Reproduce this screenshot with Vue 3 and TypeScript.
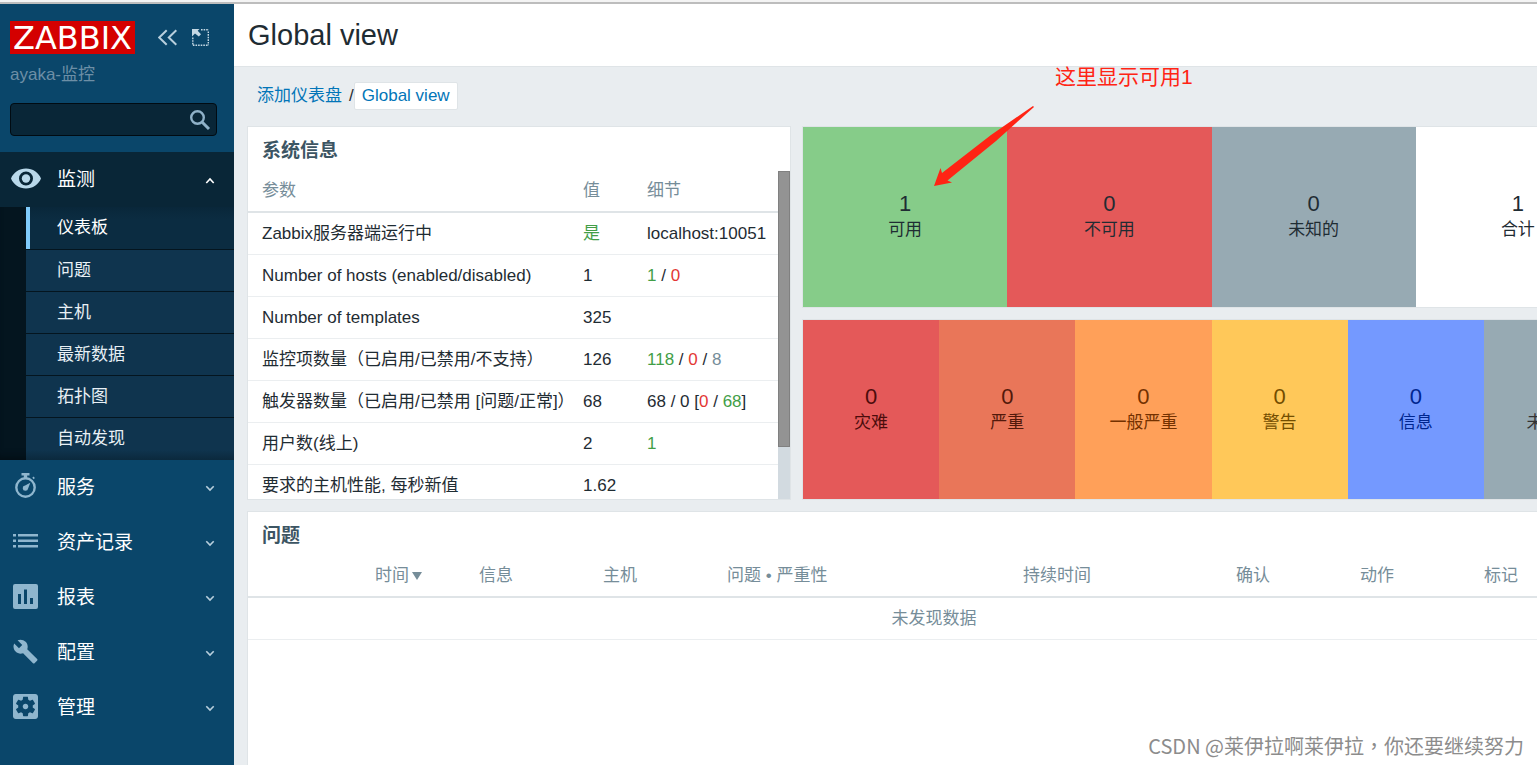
<script setup lang="ts">
interface MenuSection {
  id: string
  label: string
}
interface Part {
  text: string
  tone?: 'green' | 'red' | 'grey'
}
interface InfoRow {
  name: string
  value: Part
  details: Part[]
}
interface Tile {
  count: number
  label: string
  kind: string
}

const submenu: string[] = ['仪表板', '问题', '主机', '最新数据', '拓扑图', '自动发现']

const sections: MenuSection[] = [
  { id: 'services', label: '服务' },
  { id: 'inventory', label: '资产记录' },
  { id: 'reports', label: '报表' },
  { id: 'config', label: '配置' },
  { id: 'admin', label: '管理' },
]

const infoRows: InfoRow[] = [
  { name: 'Zabbix服务器端运行中', value: { text: '是', tone: 'green' }, details: [{ text: 'localhost:10051' }] },
  {
    name: 'Number of hosts (enabled/disabled)',
    value: { text: '1' },
    details: [{ text: '1', tone: 'green' }, { text: ' / ' }, { text: '0', tone: 'red' }],
  },
  { name: 'Number of templates', value: { text: '325' }, details: [] },
  {
    name: '监控项数量（已启用/已禁用/不支持）',
    value: { text: '126' },
    details: [
      { text: '118', tone: 'green' },
      { text: ' / ' },
      { text: '0', tone: 'red' },
      { text: ' / ' },
      { text: '8', tone: 'grey' },
    ],
  },
  {
    name: '触发器数量（已启用/已禁用 [问题/正常]）',
    value: { text: '68' },
    details: [
      { text: '68 / 0 [' },
      { text: '0', tone: 'red' },
      { text: ' / ' },
      { text: '68', tone: 'green' },
      { text: ']' },
    ],
  },
  { name: '用户数(线上)', value: { text: '2' }, details: [{ text: '1', tone: 'green' }] },
  { name: '要求的主机性能, 每秒新值', value: { text: '1.62' }, details: [] },
]

const hostTiles: Tile[] = [
  { count: 1, label: '可用', kind: 'available' },
  { count: 0, label: '不可用', kind: 'unavailable' },
  { count: 0, label: '未知的', kind: 'unknown' },
  { count: 1, label: '合计', kind: 'total' },
]

const severityTiles: Tile[] = [
  { count: 0, label: '灾难', kind: 'disaster' },
  { count: 0, label: '严重', kind: 'high' },
  { count: 0, label: '一般严重', kind: 'average' },
  { count: 0, label: '警告', kind: 'warning' },
  { count: 0, label: '信息', kind: 'information' },
  { count: 0, label: '未分类', kind: 'unclassified' },
]

const problemColumns: string[] = ['信息', '主机', '问题 • 严重性', '持续时间', '确认', '动作', '标记']
</script>

<template>
  <div class="app" lang="zh-CN">
    <div class="frame-edge"></div>
    <div class="shell">
      <aside class="sidebar">
        <div class="brand">
          <a class="logo" href="#">ZABBIX</a>
          <button class="icon-button" type="button" aria-label="收起侧边栏">
            <svg width="20" height="18" viewBox="0 0 20 18" fill="none" stroke="#b8cfdd" stroke-width="2">
              <path d="M8.700 1.200 1.200 8.500l7.500 7.300M18.300 1.200 10.800 8.500l7.500 7.300" />
            </svg>
          </button>
          <button class="icon-button" type="button" aria-label="隐藏侧边栏">
            <svg width="18" height="18" viewBox="0 0 18 18" fill="#c4d8e4">
              <path d="M0 0h7.500L5.700 1.800l3.300 3.500-2.200 2.200L3 4.500 0 7.500z" />
              <path d="M9 .8H17M16.300 2.500V16.300M15.500 16.300H.800V8.500" fill="none" stroke="#c4d8e4" stroke-width="1.400" stroke-dasharray="1.600 1" />
            </svg>
          </button>
        </div>
        <div class="server-name">ayaka-监控</div>
        <form class="search" role="search" @submit.prevent>
          <input type="text" aria-label="搜索" />
          <button type="submit" aria-label="搜索">
            <svg width="22" height="22" viewBox="0 0 22 22" fill="none" stroke="#8fb1c8">
              <circle cx="8.500" cy="8.500" r="6.300" stroke-width="2.400" />
              <path d="M13 13l7 7" stroke-width="3" />
            </svg>
          </button>
        </form>

        <nav class="menu">
          <button class="section open" type="button" aria-expanded="true">
            <span class="section-icon">
              <svg width="30" height="22" viewBox="0 0 30 22" fill="#b9d8ea">
                <path
                  fill-rule="evenodd"
                  d="M15 .5C8.200.5 2.400 4.500 0 10.500c2.400 6 8.200 10 15 10s12.600-4 15-10C27.600 4.500 21.800.5 15 .5zM15 17.500a7 7 0 1 1 0-14 7 7 0 0 1 0 14z"
                />
                <circle cx="15" cy="10.500" r="4.200" />
              </svg>
            </span>
            <span class="section-label">监测</span>
            <svg class="chevron" width="10" height="8" viewBox="0 0 10 8" fill="none" stroke="#fff" stroke-width="1.600">
              <path d="M1.300 7 5 3l3.700 4" />
            </svg>
          </button>
          <ul class="submenu">
            <li v-for="(item, i) in submenu" :key="item">
              <a href="#" :class="{ selected: i === 0 }">{{ item }}</a>
            </li>
          </ul>
          <button v-for="s in sections" :key="s.id" class="section" type="button" aria-expanded="false">
            <span class="section-icon">
              <svg v-if="s.id === 'services'" width="25" height="27" viewBox="0 0 25 27" fill="#8fb6ce">
                <path d="M8.500 0h8v2.500h-2.300V5h-3.400V2.500H8.500z" />
                <circle cx="12.500" cy="14.500" r="9.200" fill="none" stroke="#8fb6ce" stroke-width="2.400" />
                <path d="M17.300 9.800l-2.200 5.600a2.700 2.700 0 1 1-3-3zM19.300 4.800l1.200-1.200 1.400 1.400-1.200 1.200z" />
              </svg>
              <svg v-else-if="s.id === 'inventory'" width="25" height="25" viewBox="0 0 25 25" fill="#8fb6ce">
                <path d="M0 5h3v2.500H0zM5 5h20v2.500H5zM0 10.500h3V13H0zM5 10.500h20V13H5zM0 16h3v2.500H0zM5 16h20v2.500H5z" />
              </svg>
              <svg v-else-if="s.id === 'reports'" width="25" height="25" viewBox="0 0 25 25" fill="#8fb6ce">
                <path
                  fill-rule="evenodd"
                  d="M2 0h21a2 2 0 0 1 2 2v21a2 2 0 0 1-2 2H2a2 2 0 0 1-2-2V2a2 2 0 0 1 2-2zM5 10h3v10H5zM11 5.500h3V20h-3zM17 14h3v6h-3z"
                />
              </svg>
              <svg v-else-if="s.id === 'config'" width="25" height="25" viewBox="0.500 0.500 23 23" fill="#8fb6ce">
                <path
                  d="M22.700 19l-9.100-9.100c.9-2.300.4-5-1.500-6.900-2-2-5-2.400-7.400-1.300L9 6 6 9 1.600 4.700C.4 7.100.9 10.100 2.900 12.100c1.900 1.900 4.600 2.400 6.900 1.500l9.100 9.100c.4.4 1 .4 1.400 0l2.300-2.300c.5-.4.5-1.100.1-1.400z"
                />
              </svg>
              <svg v-else width="25" height="25" viewBox="3 3 18 18" fill="#8fb6ce">
                <path
                  d="M12 10c-1.100 0-2 .9-2 2s.9 2 2 2 2-.9 2-2-.9-2-2-2zm7-7H5c-1.110 0-2 .9-2 2v14c0 1.100.89 2 2 2h14c1.110 0 2-.9 2-2V5c0-1.100-.89-2-2-2zm-1.750 9c0 .23-.02.46-.05.68l1.480 1.160c.13.11.17.3.080.45l-1.400 2.420c-.09.15-.27.21-.43.15l-1.740-.7c-.36.28-.76.51-1.180.69l-.26 1.850c-.03.17-.18.3-.35.3h-2.800c-.17 0-.32-.13-.35-.29l-.26-1.850c-.43-.18-.82-.41-1.180-.69l-1.740.7c-.16.060-.34 0-.43-.15l-1.400-2.420c-.09-.15-.05-.34.080-.45l1.480-1.160c-.03-.23-.05-.46-.05-.69s.020-.46.050-.68l-1.480-1.160c-.13-.11-.17-.3-.08-.45l1.400-2.420c.09-.15.27-.21.43-.15l1.740.7c.36-.28.76-.51 1.180-.69l.26-1.850c.03-.17.18-.3.35-.3h2.800c.17 0 .32.13.35.29l.26 1.850c.43.18.82.41 1.180.69l1.740-.7c.16-.06.34 0 .43.15l1.400 2.420c.09.15.05.34-.08.45l-1.480 1.160c.03.23.05.46.05.69z"
                />
              </svg>
            </span>
            <span class="section-label">{{ s.label }}</span>
            <svg class="chevron" width="10" height="8" viewBox="0 0 10 8" fill="none" stroke="#b8cfdd" stroke-width="1.600">
              <path d="M1.300 2.200 5 6l3.700-3.800" />
            </svg>
          </button>
        </nav>
      </aside>

      <main class="content">
        <header class="page-header">
          <h1>Global view</h1>
        </header>
        <nav class="breadcrumbs">
          <a href="#">添加仪表盘</a>
          <span class="slash">/</span>
          <a class="current" href="#">Global view</a>
        </nav>

        <div class="dashboard">
          <section class="widget system-info">
            <h2>系统信息</h2>
            <div class="scroll-area">
              <div class="scroll-content">
                <table>
                  <colgroup>
                    <col class="col-param" />
                    <col class="col-value" />
                    <col />
                  </colgroup>
                  <thead>
                    <tr>
                      <th>参数</th>
                      <th>值</th>
                      <th>细节</th>
                    </tr>
                  </thead>
                  <tbody>
                    <tr v-for="row in infoRows" :key="row.name">
                      <td>{{ row.name }}</td>
                      <td :class="row.value.tone">{{ row.value.text }}</td>
                      <td><span v-for="(p, i) in row.details" :key="i" :class="p.tone">{{ p.text }}</span></td>
                    </tr>
                  </tbody>
                </table>
              </div>
              <div class="scrollbar"><div class="thumb"></div></div>
            </div>
          </section>

          <section class="widget tiles">
            <div v-for="t in hostTiles" :key="t.kind" class="tile" :class="t.kind">
              <span class="count">{{ t.count }}</span>
              <span>{{ t.label }}</span>
            </div>
          </section>

          <section class="widget tiles">
            <div v-for="t in severityTiles" :key="t.kind" class="tile" :class="t.kind">
              <span class="count">{{ t.count }}</span>
              <span>{{ t.label }}</span>
            </div>
          </section>

          <section class="widget problems">
            <h2>问题</h2>
            <table>
              <colgroup>
                <col class="col-lead" />
                <col class="col-time" />
                <col class="col-std" />
                <col class="col-std" />
                <col class="col-problem" />
                <col class="col-duration" />
                <col class="col-std" />
                <col class="col-std" />
                <col />
              </colgroup>
              <thead>
                <tr>
                  <td></td>
                  <th><a class="sort" href="#">时间<span class="arrow"></span></a></th>
                  <th v-for="c in problemColumns" :key="c">{{ c }}</th>
                </tr>
              </thead>
              <tbody>
                <tr>
                  <td class="empty" colspan="9">未发现数据</td>
                </tr>
              </tbody>
            </table>
          </section>
        </div>
      </main>
    </div>

    <div class="note">这里显示可用1</div>
    <svg class="note-arrow" width="102" height="82" viewBox="0 0 102 82" fill="#ff2414">
      <path d="M100 0 L58 29 L9 67 L7.500 62 L1 80 L19 76.500 L14.500 74.500 L63 35 L101 1 Z" />
    </svg>
    <div class="watermark" lang="zh-TW">CSDN @莱伊拉啊莱伊拉，你还要继续努力</div>
  </div>
</template>

<style>
body {
  margin: 0;
}
</style>

<style scoped>
.app {
  position: relative;
  display: flex;
  flex-direction: column;
  box-sizing: border-box;
  min-height: 100vh;
  overflow: hidden;
  background: #e9edf0;
  color: #1f2c33;
  font-family: "Liberation Sans", "Noto Sans CJK SC", sans-serif;
  font-size: 17px;
  line-height: 26px;
}
.app * {
  box-sizing: border-box;
}
a {
  color: #0275b8;
  text-decoration: none;
}
button {
  margin: 0;
  padding: 0;
  border: 0;
  background: none;
  font: inherit;
  color: inherit;
  cursor: pointer;
}
svg {
  display: block;
}
.frame-edge {
  height: 4px;
  background: #f4f4f4;
  border-bottom: 2px solid #bdbdbd;
}
.shell {
  flex: 1;
  display: flex;
}

/* Sidebar */
.sidebar {
  flex: none;
  width: 234px;
  background: #0a466a;
}
.brand {
  display: flex;
  align-items: center;
  padding: 17px 10px 0;
}
.logo {
  width: 125px;
  height: 33px;
  margin-right: 23px;
  background: #d40000;
  color: #fff;
  font-family: "DejaVu Sans", sans-serif;
  font-size: 32px;
  line-height: 35px;
  text-align: center;
}
.icon-button + .icon-button {
  margin-left: 14px;
}
.server-name {
  padding: 8px 10px 0;
  color: #6d8fa6;
}
.search {
  display: flex;
  align-items: center;
  height: 33px;
  margin: 15px 17px 16px 10px;
  padding-right: 5px;
  border: 1px solid #010b12;
  border-radius: 4px;
  background: #092637;
}
.search input {
  flex: 1;
  min-width: 0;
  height: 100%;
  padding: 0 8px;
  border: 0;
  outline: 0;
  background: none;
  color: #fff;
  font: inherit;
}
.section {
  display: flex;
  align-items: center;
  width: 100%;
  height: 55px;
  padding-right: 19px;
  color: #fff;
  font-size: 19px;
  text-align: left;
}
.section.open {
  background: #092637;
}
.section-icon {
  display: flex;
  justify-content: center;
  width: 51px;
  margin-right: 6px;
  padding-bottom: 2px;
}
.section-label {
  flex: 1;
}
.submenu {
  margin: 0;
  padding: 0 0 0 26px;
  list-style: none;
  background: #04151f;
  box-shadow: inset 0 -8px 8px -6px #020b12;
}
.submenu li + li {
  border-top: 1px solid #04151f;
}
.submenu a {
  display: block;
  height: 41px;
  padding-left: 31px;
  background: #0f344e;
  color: #e8f0f5;
  line-height: 42px;
}
.submenu li:first-child a,
.submenu li:last-child a {
  height: 42px;
}
.submenu a.selected {
  padding-left: 27px;
  border-left: 4px solid #7fcbfb;
  background: linear-gradient(#09273a, #0b2c41 12px);
  color: #fff;
}
.submenu li:last-child a {
  background: linear-gradient(#0f344e 32px, #0b293d);
}

/* Page */
.content {
  flex: 1;
  min-width: 0;
  display: flex;
  flex-direction: column;
}
.page-header {
  height: 63px;
  padding: 0 14px;
  border-bottom: 1px solid #dfe4e7;
  background: #fff;
}
h1 {
  margin: 0;
  font-size: 29px;
  font-weight: 400;
  line-height: 62px;
}
.breadcrumbs {
  display: flex;
  align-items: center;
  padding: 15px 23px 16px;
}
.slash {
  margin-left: 7px;
}
.current {
  height: 28px;
  padding: 0 7px;
  border: 1px solid #dfe4e7;
  border-radius: 2px;
  background: #fff;
}
.dashboard {
  flex: 1;
  display: grid;
  grid-template-columns: 544px 1fr;
  grid-template-rows: 182px 181px 1fr;
  gap: 11px;
  min-width: 1374px;
  margin-left: 13px;
}
.widget {
  border: 1px solid #dfe4e7;
  background: #fff;
  overflow: hidden;
}
h2 {
  margin: 0;
  padding: 4px 14px 0;
  color: #3c5563;
  font-size: 19px;
  font-weight: 700;
  line-height: 40px;
}
.system-info {
  grid-row: 1 / 3;
  display: flex;
  flex-direction: column;
}
.scroll-area {
  flex: 1;
  min-height: 0;
  display: flex;
}
.scroll-content {
  flex: 1;
  overflow: hidden;
}
.scrollbar {
  width: 12px;
  background: #d2dae0;
}
.thumb {
  height: 84%;
  border: 1px solid #808080;
  background: #939393;
}
table {
  width: 100%;
  border-collapse: separate;
  border-spacing: 0;
  table-layout: fixed;
}
th,
td {
  height: 42px;
  padding: 0 7px;
  border-bottom: 1px solid #ebeef0;
  text-align: left;
  white-space: nowrap;
}
thead th,
thead td {
  border-bottom: 2px solid #dfe4e7;
  color: #768d99;
  font-weight: 400;
}
.system-info th:first-child,
.system-info td:first-child {
  padding-left: 14px;
}
.system-info td span {
  white-space: pre;
}
.col-param {
  width: 328px;
}
.col-value {
  width: 64px;
}
.green {
  color: #429e47;
}
.red {
  color: #e33734;
}
.grey {
  color: #768d99;
}
.tiles {
  display: flex;
}
.tile {
  flex: 1;
  display: flex;
  flex-direction: column;
  align-items: center;
  justify-content: center;
}
.count {
  font-size: 22px;
}
.available {
  background: #86cc89;
}
.unavailable {
  background: #e45959;
}
.unknown {
  background: #97aab3;
}
.disaster {
  background: #e45959;
  color: #4b0c0c;
}
.high {
  background: #e97659;
  color: #52190b;
}
.average {
  background: #ffa059;
  color: #733100;
}
.warning {
  background: #ffc859;
  color: #734d00;
}
.information {
  background: #7499ff;
  color: #00268e;
}
.unclassified {
  background: #97aab3;
  color: #333;
}
.problems {
  grid-column: 1 / 3;
  border-bottom: 0;
}
.col-lead {
  width: 120px;
}
.col-time {
  width: 104px;
}
.col-std {
  width: 124px;
}
.col-problem {
  width: 296px;
}
.col-duration {
  width: 213px;
}
.sort {
  display: flex;
  align-items: center;
  color: inherit;
}
.arrow {
  margin-left: 3px;
  border: 5px solid transparent;
  border-top: 8px solid #768d99;
  border-bottom: 0;
}
.problems .empty {
  color: #768d99;
  text-align: center;
}

/* Notes lying over the page */
.note {
  position: absolute;
  top: 64px;
  left: 1055px;
  color: #ff2414;
  font-size: 21px;
}
.note-arrow {
  position: absolute;
  top: 106px;
  left: 933px;
}
.watermark {
  position: absolute;
  right: 13px;
  bottom: 6px;
  color: #8c8c8c;
  font-family: "Noto Sans CJK TC", sans-serif;
  font-size: 20px;
  text-shadow: 1px 1px 0 #fff;
}
</style>
